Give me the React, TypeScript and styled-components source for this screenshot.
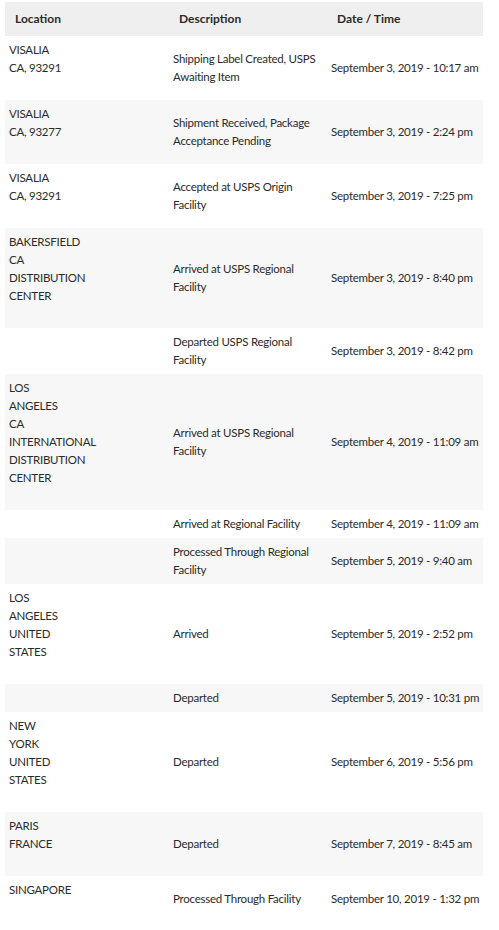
import React from 'react'
import styled, { createGlobalStyle } from 'styled-components'

interface iEvent {
  location: string[]
  description: string
  date: string
}

const events: iEvent[] = [
  { location: ['VISALIA', 'CA, 93291'], description: 'Shipping Label Created, USPS Awaiting Item', date: 'September 3, 2019 - 10:17 am' },
  { location: ['VISALIA', 'CA, 93277'], description: 'Shipment Received, Package Acceptance Pending', date: 'September 3, 2019 - 2:24 pm' },
  { location: ['VISALIA', 'CA, 93291'], description: 'Accepted at USPS Origin Facility', date: 'September 3, 2019 - 7:25 pm' },
  { location: ['BAKERSFIELD', 'CA', 'DISTRIBUTION', 'CENTER'], description: 'Arrived at USPS Regional Facility', date: 'September 3, 2019 - 8:40 pm' },
  { location: [], description: 'Departed USPS Regional Facility', date: 'September 3, 2019 - 8:42 pm' },
  { location: ['LOS', 'ANGELES', 'CA', 'INTERNATIONAL', 'DISTRIBUTION', 'CENTER'], description: 'Arrived at USPS Regional Facility', date: 'September 4, 2019 - 11:09 am' },
  { location: [], description: 'Arrived at Regional Facility', date: 'September 4, 2019 - 11:09 am' },
  { location: [], description: 'Processed Through Regional Facility', date: 'September 5, 2019 - 9:40 am' },
  { location: ['LOS', 'ANGELES', 'UNITED', 'STATES'], description: 'Arrived', date: 'September 5, 2019 - 2:52 pm' },
  { location: [], description: 'Departed', date: 'September 5, 2019 - 10:31 pm' },
  { location: ['NEW', 'YORK', 'UNITED', 'STATES'], description: 'Departed', date: 'September 6, 2019 - 5:56 pm' },
  { location: ['PARIS', 'FRANCE'], description: 'Departed', date: 'September 7, 2019 - 8:45 am' },
  { location: ['SINGAPORE'], description: 'Processed Through Facility', date: 'September 10, 2019 - 1:32 pm' },
]

const App: React.FC = () => {
  return (
    <>
      <GlobalStyle />
      <Wrapper>
        <Table>
          <colgroup>
            <col style={{ width: '164px' }} />
            <col style={{ width: '158px' }} />
            <col />
          </colgroup>
          <thead>
            <tr>
              <Th>Location</Th>
              <Th>Description</Th>
              <Th>Date / Time</Th>
            </tr>
          </thead>
          <tbody>
            {events.map((e, i) => (
              <Row key={i} $striped={i % 2 === 1}>
                <Td>
                  {e.location.map((l, j) => (
                    <Line key={j}>{l}</Line>
                  ))}
                  {e.location.length > 0 && <Line>&nbsp;</Line>}
                </Td>
                <DescTd>{e.description}</DescTd>
                <DateTd>{e.date}</DateTd>
              </Row>
            ))}
          </tbody>
        </Table>
      </Wrapper>
    </>
  )
}

export default App

const GlobalStyle = createGlobalStyle`
  body {
    margin: 0;
    background: #ffffff;
    font-family: Lato, "Open Sans", "Liberation Sans", sans-serif;
  }
`

const Wrapper = styled.div`
  padding: 2px 16px 0 5px;
  width: 478px;
`

const Table = styled.table`
  width: 478px;
  table-layout: fixed;
  border-collapse: collapse;
  font-size: 11.5px;
  letter-spacing: -0.25px;
  line-height: 18px;
  color: #2b2b2b;
`

const Th = styled.th`
  background: #efefef;
  text-align: left;
  font-size: 12px;
  letter-spacing: 0;
  font-weight: 700;
  padding: 8px 10px;
  white-space: nowrap;
`

const Row = styled.tr<{ $striped: boolean }>`
  background: ${p => (p.$striped ? '#f7f7f7' : '#ffffff')};
`

const Td = styled.td`
  padding: 5px 4px;
  vertical-align: middle;
`

const DescTd = styled(Td)`
  padding-right: 0;
`

const DateTd = styled(Td)`
  white-space: nowrap;
`

const Line = styled.div`
  white-space: nowrap;
`
